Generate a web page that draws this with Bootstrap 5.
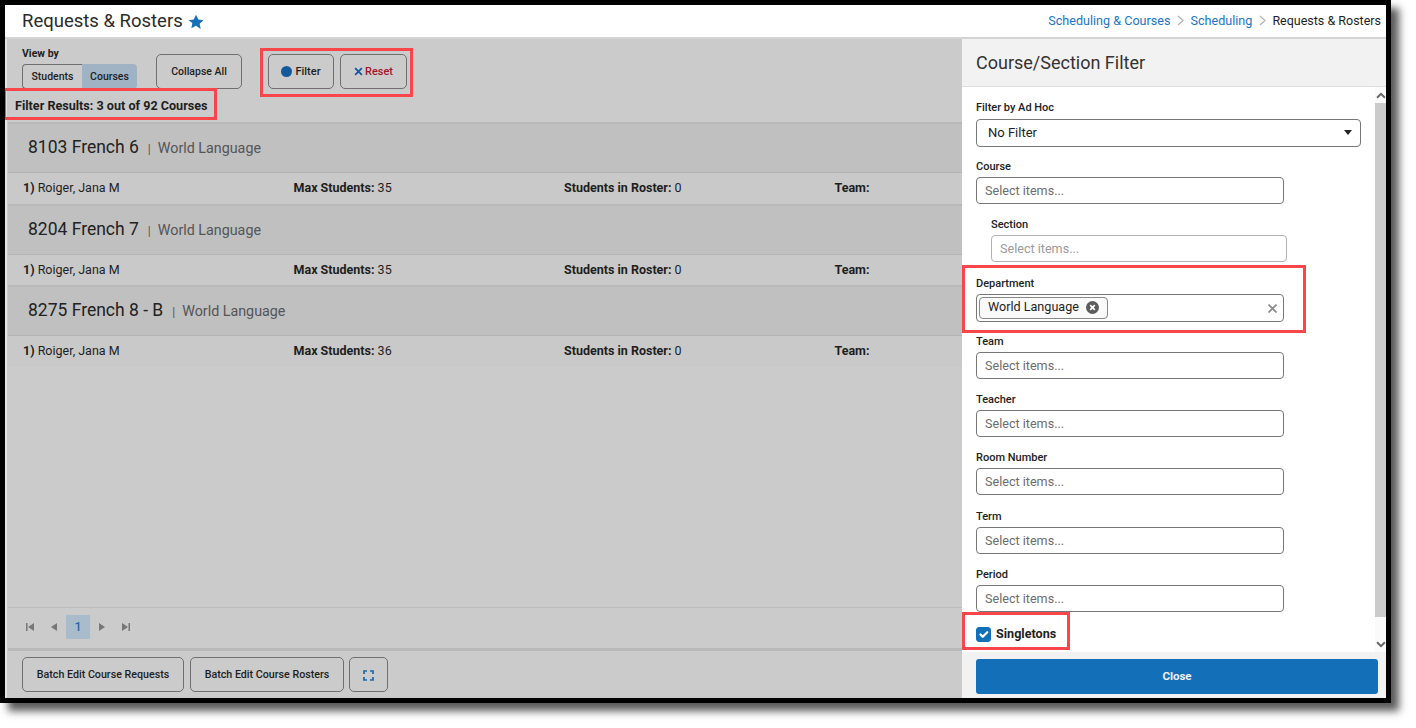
<!DOCTYPE html>
<html lang="en">
<head>
<meta charset="utf-8">
<title>Requests &amp; Rosters</title>
<link rel="stylesheet" href="https://cdn.jsdelivr.net/npm/bootstrap@5.3.0/dist/css/bootstrap.min.css">
<style>
html,body{height:728px;overflow:hidden;background:#fff;}
body{font-family:Roboto,"Liberation Sans",sans-serif;color:#1e1e1e;font-size:13px;}
.shot{width:1391px;height:703px;border:5px solid #000;box-shadow:8px 8px 8px rgba(0,0,0,.65);position:relative;background:#fff;display:flex;flex-direction:column;overflow:hidden;}
.topbar{height:34px;flex:none;border-bottom:2px solid #d4d4d4;padding:2px 5px 0 17px;}
.pagehead{font-size:18.5px;color:#2b2b2b;}
.star{width:16px;height:16px;margin-left:5px;fill:#1670b8;}
.crumbs{font-size:12.5px;gap:5.5px;padding-bottom:2px;}
.crumbs a{color:#1a75c4;text-decoration:none;font-size:12.6px;}
.chev{width:7px;height:11px;margin:0 1px;fill:none;stroke:#b5b5b5;stroke-width:1.3;}
.panes{flex:1;min-height:0;display:flex;}
.dimmed{width:957px;flex:none;background:#cbcbcb;padding-left:1px;display:flex;flex-direction:column;border-left:2px solid #e3e3e3;overflow:hidden;}
.tools{height:49px;flex:none;padding:8px 0 0 14px;}
.viewby{width:134px;}
.lbl-view{font-size:10.5px;font-weight:700;line-height:12px;margin-top:1px;margin-bottom:4px;}
.seg{display:flex;height:25px;width:115px;}
.seg span{display:flex;align-items:center;justify-content:center;font-size:10.5px;font-weight:500;}
.seg .seg-a{width:60px;border:1px solid #6f6f6f;border-right:0;border-radius:4px 0 0 4px;}
.seg .seg-b{width:55px;background:#9fb3c5;border-radius:0 4px 4px 0;}
.gbtn{background:transparent;border:1px solid #6f6f6f;border-radius:5px;color:#1e1e1e;font-size:10.5px;font-weight:500;height:35px;padding:0;display:inline-flex;align-items:center;justify-content:center;}
.tools .gbtn{margin-top:7px;}
.w-collapse{width:86px;margin-right:26px;}
.tools .w-filter{width:66px;margin-right:6px;font-size:11px;padding-top:1px;}
.tools .w-reset{width:67px;color:#a8122b;font-size:11px;padding-top:1px;}
.dot{width:11px;height:11px;border-radius:50%;background:#14599c;margin-right:3px;margin-top:-1px;}
.xmark{width:9px;height:9px;margin-right:2px;margin-top:-1px;stroke:#14599c;stroke-width:1.6;}
.results{height:34.3px;flex:none;padding:0 0 0 7px;font-size:12.6px;font-weight:700;line-height:35px;}
.courses{flex:1;min-height:0;}
.chead{height:50px;background:#c0c0c0;border-top:2px solid #b9b9b9;padding-left:20px;display:flex;align-items:baseline;padding-top:10px;}
.chead b{font-weight:400;font-size:17.5px;color:#222;}
.chead span{font-size:14.3px;color:#555;}
.chead i{font-style:normal;font-size:12px;color:#555;margin:0 7px 0 9px;}
.crow{height:31.5px;background:#c9c9c9;border-top:1px solid #b4b4b4;display:grid;grid-template-columns:repeat(4,270.5px);padding-left:15px;align-items:center;font-size:12.5px;width:1200px;}
.crow strong{font-weight:700;}
.pager{height:41px;flex:none;border-top:1px solid #bdbdbd;padding:7px 0 0 10px;display:flex;align-items:flex-start;}
.pg{width:24px;height:24px;display:flex;align-items:center;justify-content:center;}
.pg svg{width:10px;height:10px;fill:#777;}
.pg-on{background:#a9bccb;color:#2d69a8;font-size:12.5px;font-weight:500;}
.foot{height:50px;flex:none;border-top:3px solid #b9b9b9;padding:6px 0 0 14px;display:flex;gap:6px;}
.foot .gbtn{font-size:10.7px;padding-top:2px;}
.w-b1{width:162px;}.w-b2{width:154px;}.w-b3{width:39px;margin-left:-1px;}
.w-b3 svg{width:11px;height:11px;fill:none;stroke:#1b68ae;stroke-width:1.7;}
.side{flex:1;min-width:0;display:flex;flex-direction:column;background:#fff;}
.sidehead{height:48px;flex:none;background:#f2f2f2;border-bottom:1px solid #dedede;font-size:18px;color:#333;padding:0 14px;display:flex;align-items:center;}
.sidebody{flex:1;min-height:0;display:flex;}
.fields{flex:1;min-width:0;padding:14px 0 0 14px;}
.flabel{display:block;font-size:11px;font-weight:500;line-height:13px;color:#222;margin:0 0 4px;}
.fgroup{height:58.3px;width:308px;}
.fgroup.nested{margin-left:15px;width:296px;}
.fselect{height:27.5px;width:385px;padding:0 10px 0 11px;font-size:13px;border:1px solid #777;border-radius:4px;color:#222;margin-bottom:13px;background-image:url("data:image/svg+xml,%3Csvg xmlns='http://www.w3.org/2000/svg' viewBox='0 0 8 5'%3E%3Cpath d='M0 0h8L4 5z' fill='%23222'/%3E%3C/svg%3E");background-size:8px 5px;background-position:right 8px center;}
.fselect-wrap{width:385px;height:59px;}
.fselect-wrap .flabel{margin-bottom:5px;}
.finput{height:27px;padding:0 8px;font-size:12.6px;border:1px solid #777;border-radius:4px;min-height:0;}
.finput::placeholder{color:#6d6d6d;opacity:1;}
.finput.off{border-color:#b2b2b2;}
.finput.off::placeholder{color:#9a9a9a;}
.multi{height:28px;border:1px solid #777;border-radius:4px;padding:2px;display:flex;align-items:flex-start;justify-content:space-between;}
.chip{height:22px;width:129px;border:1px solid #888;border-radius:4px;background:#fafafa;padding-left:8px;display:flex;align-items:center;justify-content:space-between;padding-right:8px;font-size:12.6px;}
.chip svg{width:13px;height:13px;}
.clr{width:9px;height:9px;stroke:#8a8a8a;stroke-width:1.7;margin:7px 4px 0 0;}
.single{margin-top:0;height:16px;min-height:0;padding:0;margin-bottom:0;gap:5px;}
.single .form-check-input{float:none;margin:0;width:15px;height:15px;border-radius:3px;background-color:#146fb9;border-color:#146fb9;background-size:15px 15px;}
.single .form-check-label{font-size:12.6px;font-weight:700;padding-top:1px;}
.rail{width:11px;flex:none;background:#fafafa;display:flex;flex-direction:column;align-items:center;padding-top:5px;}
.rail svg{width:10px;height:7px;fill:none;stroke:#666;stroke-width:1.8;flex:none;}
.thumb{width:11px;height:514px;background:#cbcbcb;margin:4px 0 24px;flex:none;}
.sidefoot{height:46px;flex:none;background:#f2f2f2;padding:7px 8px 0 14px;}
.closebtn{display:block;width:100%;height:35px;background:#146fb9;border:0;border-radius:3px;color:#f0f0f0;font-size:11.5px;font-weight:700;padding:0;}
.hl{position:absolute;border:3px solid #f9464b;pointer-events:none;}
.hl-a{left:255px;top:43px;width:153px;height:49px;}
.hl-b{left:-2px;top:83px;width:214px;height:32px;}
.hl-c{left:957px;top:260px;width:344px;height:68px;}
.hl-d{left:957px;top:607px;width:108px;height:38px;}
</style>
</head>
<body>
<div class="shot">
  <header class="topbar d-flex align-items-center justify-content-between">
    <div class="pagehead d-flex align-items-center">Requests &amp; Rosters
      <svg class="star" viewBox="0 0 24 24"><path d="M12 1l3.400 7.200 7.800 1-5.700 5.400 1.500 7.800L12 17.600l-7 3.800 1.500-7.800L.8 9.200l7.800-1z"/></svg>
    </div>
    <nav class="crumbs d-flex align-items-center">
      <a href="#">Scheduling &amp; Courses</a>
      <svg class="chev" viewBox="0 0 7 11"><path d="M1 1l5 4.500L1 10"/></svg>
      <a href="#">Scheduling</a>
      <svg class="chev" viewBox="0 0 7 11"><path d="M1 1l5 4.500L1 10"/></svg>
      <span>Requests &amp; Rosters</span>
    </nav>
  </header>
  <div class="panes">
    <main class="dimmed">
      <div class="tools d-flex align-items-start">
        <div class="viewby">
          <div class="lbl-view">View by</div>
          <div class="seg"><span class="seg-a">Students</span><span class="seg-b">Courses</span></div>
        </div>
        <button type="button" class="gbtn w-collapse">Collapse All</button>
        <button type="button" class="gbtn w-filter"><span class="dot"></span>Filter</button>
        <button type="button" class="gbtn w-reset"><svg class="xmark" viewBox="0 0 8 8"><path d="M1 1l6 6M7 1l-6 6"/></svg>Reset</button>
      </div>
      <div class="results">Filter Results: 3 out of 92 Courses</div>
      <div class="courses">
        <div class="chead"><b>8103 French 6</b><i>|</i><span>World Language</span></div>
        <div class="crow"><div><strong>1)</strong> Roiger, Jana M</div><div><strong>Max Students:</strong> 35</div><div><strong>Students in Roster:</strong> 0</div><div><strong>Team:</strong></div></div>
        <div class="chead"><b>8204 French 7</b><i>|</i><span>World Language</span></div>
        <div class="crow"><div><strong>1)</strong> Roiger, Jana M</div><div><strong>Max Students:</strong> 35</div><div><strong>Students in Roster:</strong> 0</div><div><strong>Team:</strong></div></div>
        <div class="chead"><b>8275 French 8 - B</b><i>|</i><span>World Language</span></div>
        <div class="crow"><div><strong>1)</strong> Roiger, Jana M</div><div><strong>Max Students:</strong> 36</div><div><strong>Students in Roster:</strong> 0</div><div><strong>Team:</strong></div></div>
      </div>
      <div class="pager">
        <div class="pg"><svg viewBox="0 0 10 10"><path d="M1 1h1.500v8H1zM9 1v8L3 5z"/></svg></div>
        <div class="pg"><svg viewBox="0 0 10 10"><path d="M8 1v8L2 5z"/></svg></div>
        <div class="pg pg-on">1</div>
        <div class="pg"><svg viewBox="0 0 10 10"><path d="M2 1v8l6-4z"/></svg></div>
        <div class="pg"><svg viewBox="0 0 10 10"><path d="M1 1v8l6-4zM7.500 1H9v8H7.500z"/></svg></div>
      </div>
      <div class="foot">
        <button type="button" class="gbtn w-b1">Batch Edit Course Requests</button>
        <button type="button" class="gbtn w-b2">Batch Edit Course Rosters</button>
        <button type="button" class="gbtn w-b3"><svg viewBox="0 0 11 11"><path d="M1 4V1h3M7 1h3v3M10 7v3H7M4 10H1V7"/></svg></button>
      </div>
    </main>
    <aside class="side">
      <div class="sidehead">Course/Section Filter</div>
      <div class="sidebody">
        <div class="fields">
          <div class="fselect-wrap">
            <label class="flabel" for="adhoc">Filter by Ad Hoc</label>
            <select id="adhoc" class="form-select fselect"><option>No Filter</option></select>
          </div>
          <div class="fgroup"><label class="flabel">Course</label><input class="form-control finput" placeholder="Select items..."></div>
          <div class="fgroup nested"><label class="flabel">Section</label><input class="form-control finput off" placeholder="Select items..."></div>
          <div class="fgroup"><label class="flabel">Department</label>
            <div class="multi"><span class="chip">World Language<svg viewBox="0 0 13 13"><circle cx="6.500" cy="6.500" r="6.500" fill="#5c5c5c"/><path d="M4.200 4.200l4.600 4.600M8.800 4.200l-4.600 4.600" stroke="#fff" stroke-width="1.700"/></svg></span><svg class="clr" viewBox="0 0 9 9"><path d="M.5.500l8 8M8.500.500l-8 8"/></svg></div>
          </div>
          <div class="fgroup"><label class="flabel">Team</label><input class="form-control finput" placeholder="Select items..."></div>
          <div class="fgroup"><label class="flabel">Teacher</label><input class="form-control finput" placeholder="Select items..."></div>
          <div class="fgroup"><label class="flabel">Room Number</label><input class="form-control finput" placeholder="Select items..."></div>
          <div class="fgroup"><label class="flabel">Term</label><input class="form-control finput" placeholder="Select items..."></div>
          <div class="fgroup"><label class="flabel">Period</label><input class="form-control finput" placeholder="Select items..."></div>
          <div class="form-check d-flex align-items-center single"><input class="form-check-input" type="checkbox" id="sing" checked><label class="form-check-label" for="sing">Singletons</label></div>
        </div>
        <div class="rail">
          <svg viewBox="0 0 9 6"><path d="M1 5l3.500-3.500L8 5"/></svg>
          <div class="thumb"></div>
          <svg viewBox="0 0 9 6"><path d="M1 1l3.500 3.500L8 1"/></svg>
        </div>
      </div>
      <div class="sidefoot"><button type="button" class="closebtn">Close</button></div>
    </aside>
  </div>
  <div class="hl hl-a"></div>
  <div class="hl hl-b"></div>
  <div class="hl hl-c"></div>
  <div class="hl hl-d"></div>
</div>
<script src="https://cdn.jsdelivr.net/npm/bootstrap@5.3.0/dist/js/bootstrap.bundle.min.js"></script>
</body>
</html>
